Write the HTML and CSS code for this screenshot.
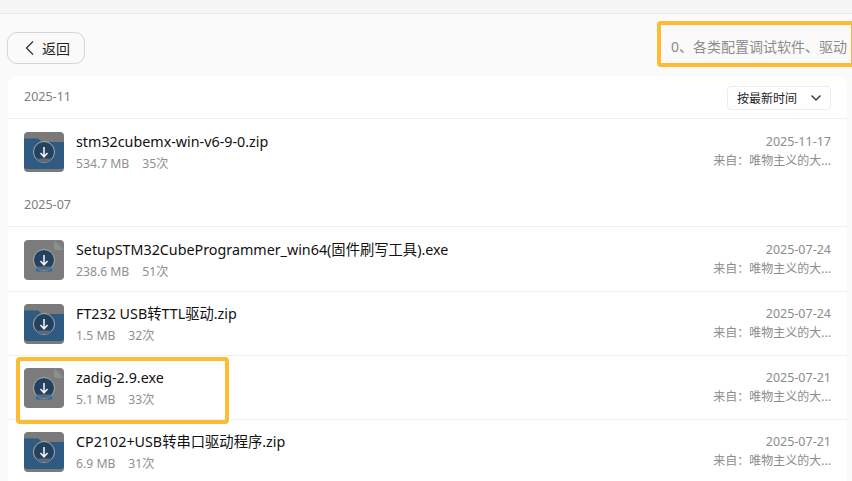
FILE: index.html
```html
<!DOCTYPE html>
<html lang="zh-CN">
<head>
<meta charset="utf-8">
<title>文件列表</title>
<link rel="stylesheet" href="styles.css">
</head>
<body>
<svg class="defs" width="0" height="0" aria-hidden="true">
  <symbol id="badge" viewBox="0 0 40 40">
    <circle cx="20" cy="20" r="10.5" fill="#24415e" stroke="#a3adb5" stroke-width="1"/>
    <path d="M12 26.500a10 10 0 0 0 16 0z" fill="#5d6a75"/>
    <path d="M20 15V24.500M16.500 21L20 24.800L23.500 21" fill="none" stroke="#f0f0f0" stroke-width="1.600"/>
  </symbol>
  <symbol id="zip" viewBox="0 0 40 40">
    <rect width="40" height="40" rx="4" fill="#7a7a7a"/>
    <path d="M0 6.500h14l4 3.500h22v24a3 3 0 0 1-3 3H3a3 3 0 0 1-3-3z" fill="#2f5b82"/>
    <use href="#badge"/>
  </symbol>
  <symbol id="exe" viewBox="0 0 40 40">
    <rect width="40" height="40" rx="4" fill="#7c7c7c"/>
    <path d="M30 0l10 10h-8a2 2 0 0 1-2-2z" fill="#8d8d8d"/>
    <rect x="12" y="28.500" width="16" height="3" fill="#2b6ca3"/>
    <use href="#badge"/>
  </symbol>
</svg>

<div class="topbar"></div>
<header class="toolbar">
  <button class="back" type="button">
    <svg class="back-icon" viewBox="0 0 12 16"><path d="M9 1.500L2.500 8L9 14.500" fill="none" stroke="#333" stroke-width="1.300"/></svg>
    <span>返回</span>
  </button>
  <div class="folder-title">0、各类配置调试软件、驱动</div>
</header>

<main class="card">
  <div class="group-head">
    <span class="month">2025-11</span>
    <div class="sort">
      <span>按最新时间</span>
      <svg class="sort-icon" viewBox="0 0 12 8"><path d="M1.500 1.500L6 6l4.500-4.500" fill="none" stroke="#333" stroke-width="1.300"/></svg>
    </div>
  </div>
  <div class="row first last">
    <svg class="icon"><use href="#zip"/></svg>
    <div class="info">
      <div class="name">stm32cubemx-win-v6-9-0.zip</div>
      <div class="meta"><span>534.7 MB</span><span>35次</span></div>
    </div>
    <div class="side"><div class="date">2025-11-17</div><div class="from">来自：唯物主义的大...</div></div>
  </div>

  <div class="group-head"><span class="month">2025-07</span></div>
  <div class="row first">
    <svg class="icon"><use href="#exe"/></svg>
    <div class="info">
      <div class="name">SetupSTM32CubeProgrammer_win64(固件刷写工具).exe</div>
      <div class="meta"><span>238.6 MB</span><span>51次</span></div>
    </div>
    <div class="side"><div class="date">2025-07-24</div><div class="from">来自：唯物主义的大...</div></div>
  </div>
  <div class="row">
    <svg class="icon"><use href="#zip"/></svg>
    <div class="info">
      <div class="name">FT232 USB转TTL驱动.zip</div>
      <div class="meta"><span>1.5 MB</span><span>32次</span></div>
    </div>
    <div class="side"><div class="date">2025-07-24</div><div class="from">来自：唯物主义的大...</div></div>
  </div>
  <div class="row">
    <svg class="icon"><use href="#exe"/></svg>
    <div class="info">
      <div class="name">zadig-2.9.exe</div>
      <div class="meta"><span>5.1 MB</span><span>33次</span></div>
    </div>
    <div class="side"><div class="date">2025-07-21</div><div class="from">来自：唯物主义的大...</div></div>
  </div>
  <div class="row">
    <svg class="icon"><use href="#zip"/></svg>
    <div class="info">
      <div class="name">CP2102+USB转串口驱动程序.zip</div>
      <div class="meta"><span>6.9 MB</span><span>31次</span></div>
    </div>
    <div class="side"><div class="date">2025-07-21</div><div class="from">来自：唯物主义的大...</div></div>
  </div>
</main>

<div class="mark mark-title"></div>
<div class="mark mark-file"></div>
</body>
</html>
```

FILE: styles.css
```css
* { box-sizing: border-box; }
html, body { margin: 0; height: 100%; }
body {
  position: relative;
  overflow: hidden;
  background: #fafafa;
  color: #111;
  font-family: "Noto Sans", "Noto Sans CJK SC", sans-serif;
}
.defs { position: absolute; }
.topbar { height: 14px; background: #f5f5f5; border-bottom: 1px solid #e9e9e9; }
.toolbar {
  height: 62px;
  padding: 18px 5px 0 7px;
  display: flex;
  justify-content: space-between;
  align-items: flex-start;
}
.back {
  width: 78px;
  height: 32px;
  display: flex;
  align-items: center;
  justify-content: center;
  gap: 6px;
  background: #fafafa;
  border: 1px solid #d6d6d6;
  border-radius: 10px;
  font: 14px "Noto Sans", "Noto Sans CJK SC", sans-serif;
  color: #222;
  padding: 0 0 0 2px;
}
.back-icon { width: 12px; height: 16px; }
.folder-title { margin-top: 5px; font-size: 14px; line-height: 20px; color: #8c8c8c; }
.card {
  margin: 0 5px 0 8px;
  background: #fff;
  border-radius: 8px 8px 0 0;
}
.group-head {
  height: 43px;
  padding: 0 16px;
  display: flex;
  align-items: center;
  justify-content: space-between;
  border-bottom: 1px solid #f1f1f1;
}
.month { margin-bottom: 2px; font-size: 12.500px; color: #7d7d7d; }
.sort {
  width: 104px;
  height: 24px;
  margin-top: 2px;
  padding: 0 8px 0 9px;
  display: flex;
  align-items: center;
  justify-content: space-between;
  border: 1px solid #ececec;
  border-radius: 4px;
  font-size: 12px;
  color: #222;
}
.sort-icon { width: 12px; height: 8px; }
.row {
  height: 64px;
  padding: 12px 16px 0;
  display: flex;
  align-items: flex-start;
  gap: 12px;
  border-bottom: 1px solid #f1f1f1;
}
.row.first { height: 65px; padding-top: 13px; }
.row.last { border-bottom: 0; }
.icon { width: 40px; height: 40px; flex: none; }
.info { flex: 1; min-width: 0; }
.name { font-size: 14.300px; line-height: 20px; color: #111; white-space: nowrap; }
.meta { margin-top: 4px; display: flex; gap: 13px; font-size: 12.200px; line-height: 16px; color: #8f8f8f; }
.side { text-align: right; font-size: 12px; color: #8c8c8c; }
.date { font-size: 12.500px; line-height: 20px; }
.from { line-height: 18px; }
.mark {
  position: absolute;
  border: 4px solid #fdbc34;
  border-radius: 4px;
  pointer-events: none;
}
.mark-title { left: 657px; top: 21px; width: 198px; height: 46px; }
.mark-file { left: 16px; top: 357px; width: 213px; height: 67px; }
```
